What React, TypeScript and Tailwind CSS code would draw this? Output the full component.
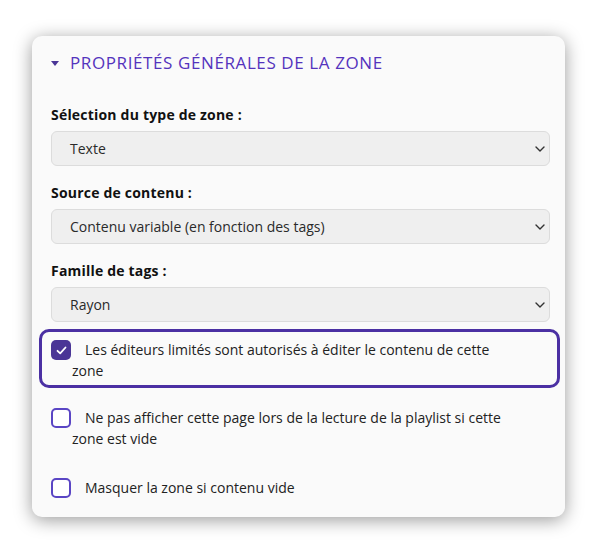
import React, { useState } from 'react';

const font = { fontFamily: '"Open Sans", "Liberation Sans", sans-serif' };

function Chevron() {
  return (
    <svg width="10" height="6" viewBox="0 0 10 6" className="shrink-0">
      <path d="M1 1l4 4 4-4" fill="none" stroke="#333" strokeWidth="1.4" strokeLinecap="round" strokeLinejoin="round" />
    </svg>
  );
}

function Field({ label, value }: { label: string; value: string }) {
  return (
    <div className="mb-[17px]">
      <div className="text-[14px] leading-[20px] font-bold tracking-[0.2px] text-[#111] mb-[6px]">{label}</div>
      <div className="h-[35px] flex items-center justify-between rounded-[6px] border border-[#dcdcdc] bg-[#efefef] pl-[18px] pr-[4px] text-[14px] text-[#2a2a2a]">
        <span>{value}</span>
        <Chevron />
      </div>
    </div>
  );
}

function Check({ label, checked, focused }: { label: string; checked: boolean; focused?: boolean }) {
  const [on, setOn] = useState(checked);
  return (
    <div
      className={`-ml-[12px] -mr-[10px] rounded-[10px] border-[3px] pt-[7px] pb-[4px] pl-[30px] pr-[40px] ${focused ? 'border-[#4b30a3]' : 'border-transparent'}`}
      onClick={() => setOn(!on)}
    >
      <div className="text-[14px] leading-[21px] text-[#222]">
        <span
          className={`float-left -ml-[21px] mt-[1px] mr-[14px] w-[20px] h-[20px] rounded-[5px] flex items-center justify-center ${on ? 'bg-[#4a3596]' : 'border-2 border-[#5a45c4] bg-white'}`}
        >
          {on && (
            <svg width="11" height="9" viewBox="0 0 11 9">
              <path d="M1.5 4.8l2.7 2.6L9.5 1.5" fill="none" stroke="#fff" strokeWidth="1.8" strokeLinecap="round" strokeLinejoin="round" />
            </svg>
          )}
        </span>
        {label}
      </div>
    </div>
  );
}

export default function App() {
  return (
    <div className="min-h-screen bg-white pt-[36px] pl-[32px]" style={font}>
      <div className="w-[533px] rounded-[10px] bg-[#fafafa] shadow-[0_3px_18px_rgba(0,0,0,0.4)] pt-[15px] pb-[12px] pl-[19px] pr-[15px]">
        <div className="h-[24px] flex items-center text-[#5433bd] text-[17px] tracking-[0.6px] mb-[30px]">
          <svg width="8" height="5" viewBox="0 0 8 5" className="mr-[11px]">
            <path d="M0 0h8L4 5z" fill="#4a3596" />
          </svg>
          <span>PROPRIÉTÉS GÉNÉRALES DE LA ZONE</span>
        </div>
        <Field label="Sélection du type de zone :" value="Texte" />
        <Field label="Source de contenu :" value="Contenu variable (en fonction des tags)" />
        <div className="-mb-[10px]">
          <Field label="Famille de tags :" value="Rayon" />
        </div>
        <div className="flex flex-col gap-[9px]">
          <Check focused checked label="Les éditeurs limités sont autorisés à éditer le contenu de cette zone" />
          <Check checked={false} label="Ne pas afficher cette page lors de la lecture de la playlist si cette zone est vide" />
          <div className="mt-[2px]">
            <Check checked={false} label="Masquer la zone si contenu vide" />
          </div>
        </div>
      </div>
    </div>
  );
}
